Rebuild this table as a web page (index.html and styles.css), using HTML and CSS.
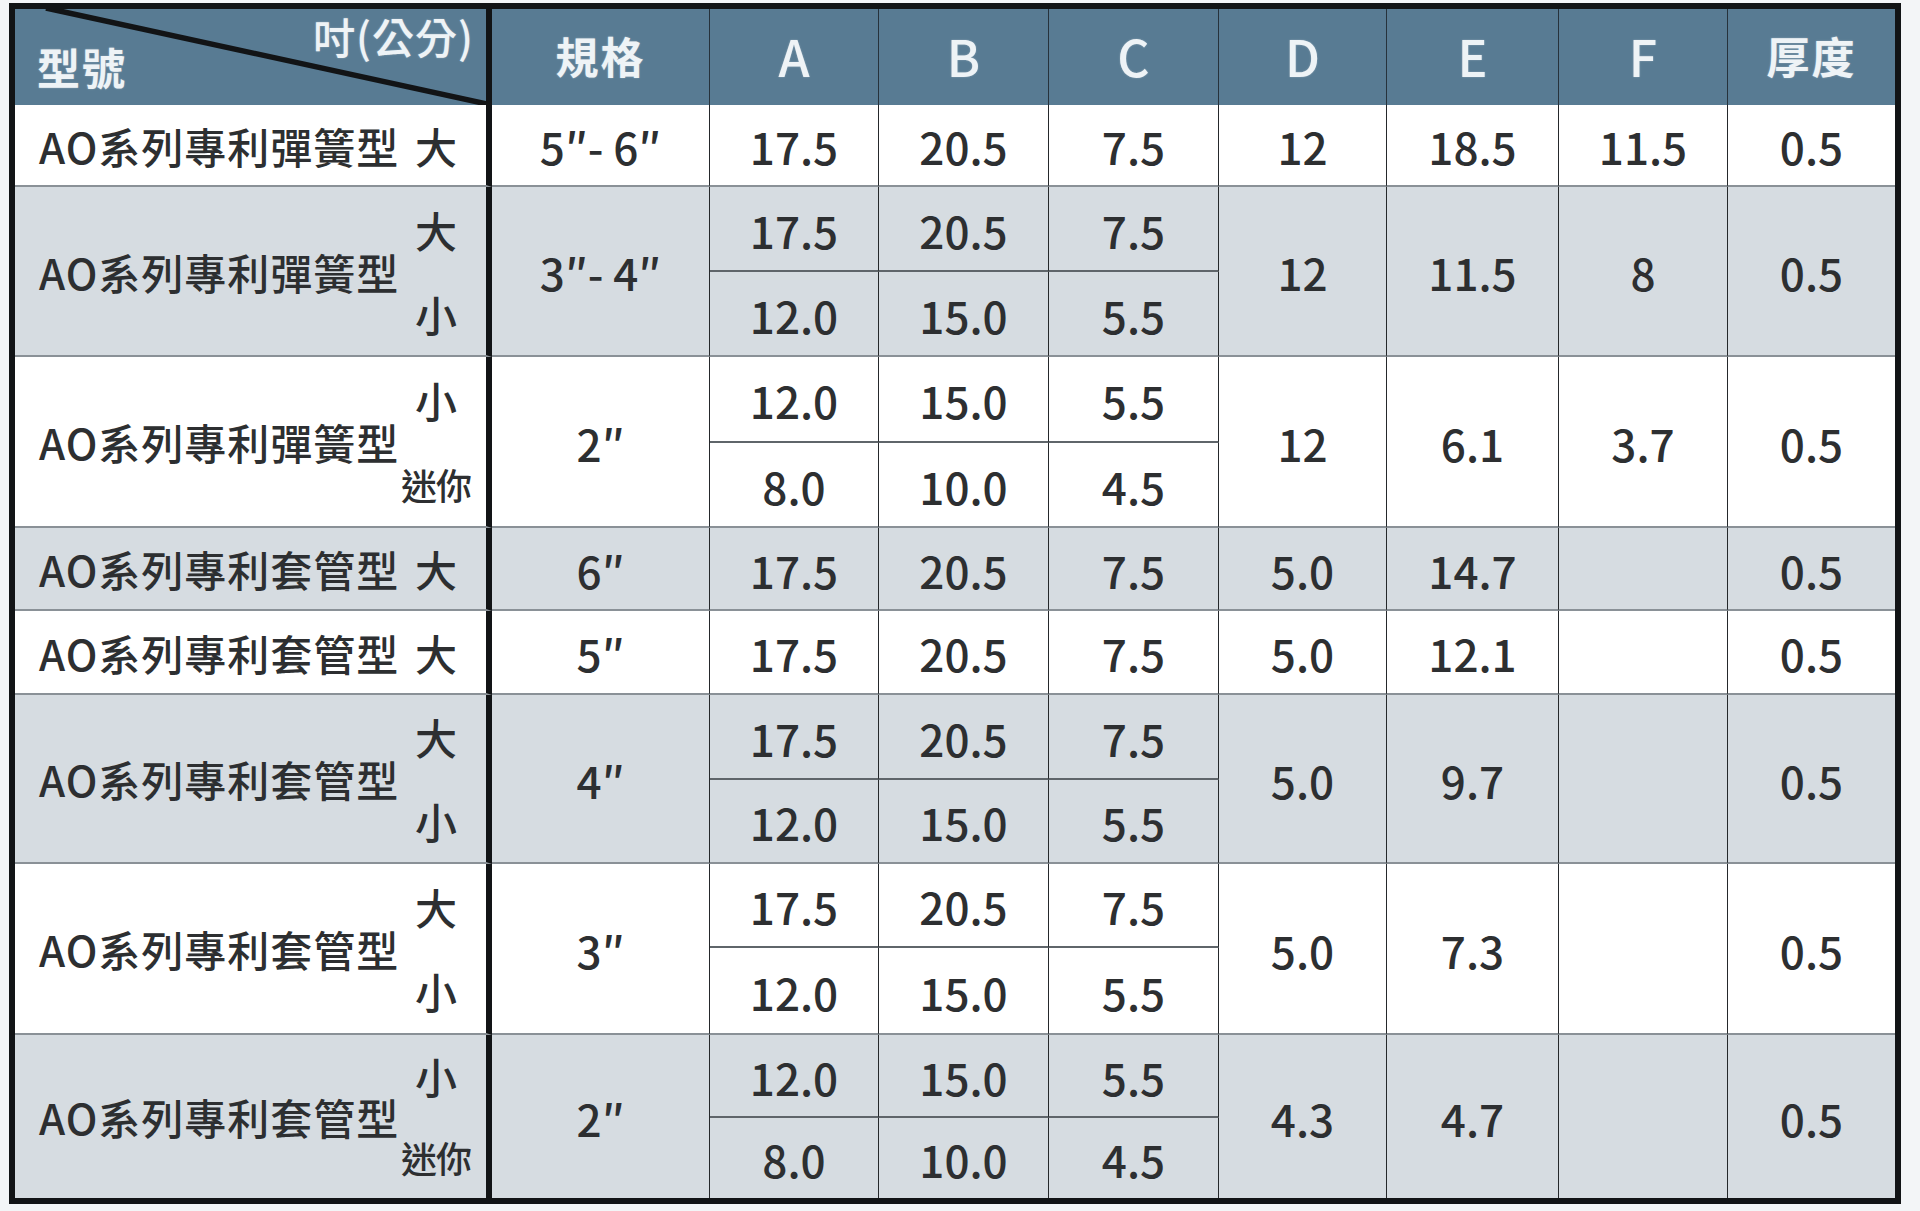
FILE: index.html
```html
<!DOCTYPE html>
<html lang="zh-Hant">
<head>
<meta charset="utf-8">
<title>AO系列 規格表</title>
<link rel="stylesheet" href="styles.css">
</head>
<body>
<div class="sheet">
  <!-- header -->
  <div class="h h-model">
    <svg class="diag" viewBox="0 0 471 96" preserveAspectRatio="none"><line x1="31" y1="-1" x2="472" y2="95" stroke="#121416" stroke-width="5.5"/></svg>
    <span class="h-unit">吋(公分)</span>
    <span class="h-type">型號</span>
  </div>
  <div class="h cjk">規格</div>
  <div class="h">A</div>
  <div class="h">B</div>
  <div class="h">C</div>
  <div class="h">D</div>
  <div class="h">E</div>
  <div class="h">F</div>
  <div class="h cjk last">厚度</div>

  <!-- row 1 -->
  <div class="c first w"><span class="name">AO系列專利彈簧型</span><span class="sizes"><span>大</span></span></div>
  <div class="c w">5″- 6″</div>
  <div class="c w">17.5</div>
  <div class="c w">20.5</div>
  <div class="c w">7.5</div>
  <div class="c w">12</div>
  <div class="c w">18.5</div>
  <div class="c w">11.5</div>
  <div class="c w last">0.5</div>

  <!-- row 2 -->
  <div class="c first g s2"><span class="name">AO系列專利彈簧型</span><span class="sizes"><span>大</span><span>小</span></span></div>
  <div class="c g s2">3″- 4″</div>
  <div class="c g sub">17.5</div>
  <div class="c g sub">20.5</div>
  <div class="c g sub">7.5</div>
  <div class="c g s2">12</div>
  <div class="c g s2">11.5</div>
  <div class="c g s2">8</div>
  <div class="c g s2 last">0.5</div>
  <div class="c g">12.0</div>
  <div class="c g">15.0</div>
  <div class="c g">5.5</div>

  <!-- row 3 -->
  <div class="c first w s2"><span class="name">AO系列專利彈簧型</span><span class="sizes"><span>小</span><span class="mini">迷你</span></span></div>
  <div class="c w s2">2″</div>
  <div class="c w sub">12.0</div>
  <div class="c w sub">15.0</div>
  <div class="c w sub">5.5</div>
  <div class="c w s2">12</div>
  <div class="c w s2">6.1</div>
  <div class="c w s2">3.7</div>
  <div class="c w s2 last">0.5</div>
  <div class="c w">8.0</div>
  <div class="c w">10.0</div>
  <div class="c w">4.5</div>

  <!-- row 4 -->
  <div class="c first g"><span class="name">AO系列專利套管型</span><span class="sizes"><span>大</span></span></div>
  <div class="c g">6″</div>
  <div class="c g">17.5</div>
  <div class="c g">20.5</div>
  <div class="c g">7.5</div>
  <div class="c g">5.0</div>
  <div class="c g">14.7</div>
  <div class="c g"></div>
  <div class="c g last">0.5</div>

  <!-- row 5 -->
  <div class="c first w"><span class="name">AO系列專利套管型</span><span class="sizes"><span>大</span></span></div>
  <div class="c w">5″</div>
  <div class="c w">17.5</div>
  <div class="c w">20.5</div>
  <div class="c w">7.5</div>
  <div class="c w">5.0</div>
  <div class="c w">12.1</div>
  <div class="c w"></div>
  <div class="c w last">0.5</div>

  <!-- row 6 -->
  <div class="c first g s2"><span class="name">AO系列專利套管型</span><span class="sizes"><span>大</span><span>小</span></span></div>
  <div class="c g s2">4″</div>
  <div class="c g sub">17.5</div>
  <div class="c g sub">20.5</div>
  <div class="c g sub">7.5</div>
  <div class="c g s2">5.0</div>
  <div class="c g s2">9.7</div>
  <div class="c g s2"></div>
  <div class="c g s2 last">0.5</div>
  <div class="c g">12.0</div>
  <div class="c g">15.0</div>
  <div class="c g">5.5</div>

  <!-- row 7 -->
  <div class="c first w s2"><span class="name">AO系列專利套管型</span><span class="sizes"><span>大</span><span>小</span></span></div>
  <div class="c w s2">3″</div>
  <div class="c w sub">17.5</div>
  <div class="c w sub">20.5</div>
  <div class="c w sub">7.5</div>
  <div class="c w s2">5.0</div>
  <div class="c w s2">7.3</div>
  <div class="c w s2"></div>
  <div class="c w s2 last">0.5</div>
  <div class="c w">12.0</div>
  <div class="c w">15.0</div>
  <div class="c w">5.5</div>

  <!-- row 8 -->
  <div class="c first g s2 bottom"><span class="name">AO系列專利套管型</span><span class="sizes"><span>小</span><span class="mini">迷你</span></span></div>
  <div class="c g s2 bottom">2″</div>
  <div class="c g sub">12.0</div>
  <div class="c g sub">15.0</div>
  <div class="c g sub">5.5</div>
  <div class="c g s2 bottom">4.3</div>
  <div class="c g s2 bottom">4.7</div>
  <div class="c g s2 bottom"></div>
  <div class="c g s2 bottom last">0.5</div>
  <div class="c g bottom">8.0</div>
  <div class="c g bottom">10.0</div>
  <div class="c g bottom">4.5</div>
</div>
</body>
</html>
```

FILE: styles.css
```css
html, body {
  margin: 0;
  padding: 0;
  background: #f3f5f7;
}

body {
  padding: 3px 0 0 9px;
  font-family: "Noto Sans CJK TC", "Noto Sans", sans-serif;
  color: #2d2f31;
}

.sheet {
  width: 1880px;
  border: 6px solid #121416;
  display: grid;
  grid-template-columns: 477px 218px 169px 170px 170px 168px 172px 169px 167px;
  grid-template-rows: 96px 82px 85px 85px 86px 85px 83px 84px 85px 84px 84px 87px 83px 80px;
}

/* header */
.h {
  position: relative;
  background: #587b93;
  border-right: 1px solid #26323b;
  display: flex;
  align-items: center;
  justify-content: center;
  color: #eef3f6;
  font-size: 50px;
  font-weight: 500;
  text-shadow: 0 0 2px rgba(255, 255, 255, 0.35);
  padding-bottom: 4px;
  box-sizing: border-box;
}

.h.cjk {
  font-size: 43px;
  font-weight: 700;
  letter-spacing: 2px;
}

.h.last {
  border-right: none;
}

.h-model {
  border-right: 6px solid #121416;
  display: block;
  padding: 0;
}

.diag {
  position: absolute;
  left: 0;
  top: 0;
  width: 471px;
  height: 96px;
}

.h-unit {
  position: absolute;
  right: 12px;
  top: -4px;
  font-size: 42px;
  font-weight: 500;
  letter-spacing: 1px;
  white-space: nowrap;
}

.h-type {
  position: absolute;
  left: 22px;
  bottom: 8px;
  font-size: 43px;
  font-weight: 700;
  letter-spacing: 2px;
  white-space: nowrap;
}

/* body cells */
.c {
  box-sizing: border-box;
  border-right: 1px solid #25282b;
  border-bottom: 2px solid #8a9197;
  display: flex;
  align-items: center;
  justify-content: center;
  font-size: 44px;
  font-weight: 500;
  padding-top: 2px;
  white-space: nowrap;
}

.c.w {
  background: #ffffff;
}

.c.g {
  background: #d6dce1;
}

.c.s2 {
  grid-row: span 2;
}

.c.sub {
  border-bottom: 2px solid #5f656a;
}

.c.last {
  border-right: none;
}

.c.bottom {
  border-bottom: none;
}

.c.first {
  border-right: 6px solid #121416;
  justify-content: space-between;
  align-items: stretch;
  padding: 0 14px 0 24px;
}

.name {
  flex: 0 0 auto;
  display: flex;
  align-items: center;
  font-size: 42px;
  font-weight: 500;
  letter-spacing: 1px;
  white-space: nowrap;
}

.sizes {
  flex: 0 0 72px;
  display: flex;
  flex-direction: column;
}

.sizes span {
  flex: 1;
  display: flex;
  align-items: center;
  justify-content: center;
  font-size: 42px;
  font-weight: 500;
}

.sizes span.mini {
  font-size: 36px;
  letter-spacing: -1px;
}
```
